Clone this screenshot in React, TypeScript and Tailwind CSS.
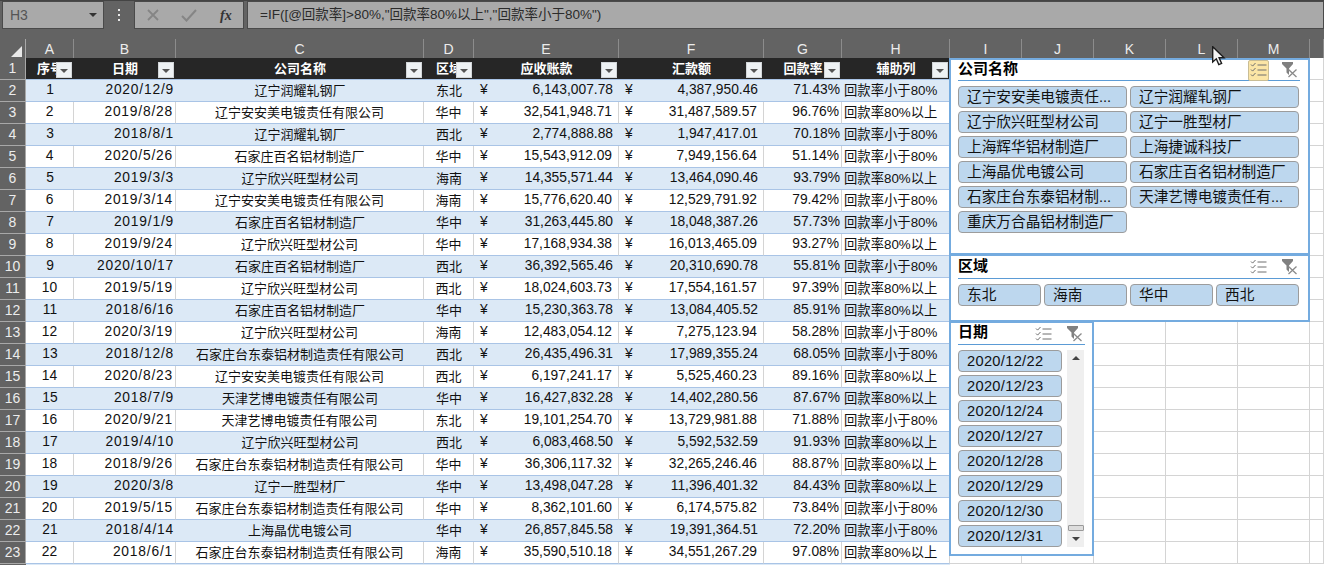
const LOW = "回款率小于80%"
const HIGH = "回款率80%以上"

const COMPANY_A = "辽宁润耀轧钢厂"
const COMPANY_B = "辽宁安安美电镀责任有限公司"
const COMPANY_C = "石家庄百名铝材制造厂"
const COMPANY_D = "辽宁欣兴旺型材公司"
const COMPANY_E = "石家庄台东泰铝材制造责任有限公司"

const rows: [string, string, string, string, string, string, string][] = [
  ["2020/12/9", COMPANY_A, "东北", "6,143,007.78", "4,387,950.46", "71.43%", LOW],
  ["2019/8/28", COMPANY_B, "华中", "32,541,948.71", "31,487,589.57", "96.76%", HIGH],
  ["2018/8/1", COMPANY_A, "西北", "2,774,888.88", "1,947,417.01", "70.18%", LOW],
  ["2020/5/26", COMPANY_C, "华中", "15,543,912.09", "7,949,156.64", "51.14%", LOW],
  ["2019/3/3", COMPANY_D, "海南", "14,355,571.44", "13,464,090.46", "93.79%", HIGH],
  ["2019/3/14", COMPANY_B, "海南", "15,776,620.40", "12,529,791.92", "79.42%", LOW],
  ["2019/1/9", COMPANY_C, "华中", "31,263,445.80", "18,048,387.26", "57.73%", LOW],
  ["2019/9/24", COMPANY_D, "华中", "17,168,934.38", "16,013,465.09", "93.27%", HIGH],
  ["2020/10/17", COMPANY_C, "西北", "36,392,565.46", "20,310,690.78", "55.81%", LOW],
  ["2019/5/19", COMPANY_D, "西北", "18,024,603.73", "17,554,161.57", "97.39%", HIGH],
  ["2018/6/16", COMPANY_C, "华中", "15,230,363.78", "13,084,405.52", "85.91%", HIGH],
  ["2020/3/19", COMPANY_D, "海南", "12,483,054.12", "7,275,123.94", "58.28%", LOW],
  ["2018/12/8", COMPANY_E, "西北", "26,435,496.31", "17,989,355.24", "68.05%", LOW],
  ["2020/8/23", COMPANY_B, "西北", "6,197,241.17", "5,525,460.23", "89.16%", HIGH],
  ["2018/7/9", "天津艺博电镀责任有限公司", "华中", "16,427,832.28", "14,402,280.56", "87.67%", HIGH],
  ["2020/9/21", "天津艺博电镀责任有限公司", "东北", "19,101,254.70", "13,729,981.88", "71.88%", LOW],
  ["2019/4/10", COMPANY_D, "西北", "6,083,468.50", "5,592,532.59", "91.93%", HIGH],
  ["2018/9/26", COMPANY_E, "华中", "36,306,117.32", "32,265,246.46", "88.87%", HIGH],
  ["2020/3/8", "辽宁一胜型材厂", "华中", "13,498,047.28", "11,396,401.32", "84.43%", HIGH],
  ["2019/5/15", COMPANY_E, "华中", "8,362,101.60", "6,174,575.82", "73.84%", LOW],
  ["2018/4/14", "上海晶优电镀公司", "华中", "26,857,845.58", "19,391,364.51", "72.20%", LOW],
  ["2018/6/1", COMPANY_E, "海南", "35,590,510.18", "34,551,267.29", "97.08%", HIGH],
]

const gridCols =
  "grid grid-cols-[26px_48px_102px_248px_50px_145px_145px_78px_108px_72px_72px_72px_72px_72px_14px]"

function FilterButton() {
  return (
    <span className="absolute right-[2px] top-[4px] flex h-[16px] w-[16px] items-center justify-center border border-[#d2d6d9] bg-[#eef2f4]">
      <span className="mt-[2px] h-0 w-0 border-x-[4px] border-t-[4px] border-x-transparent border-t-[#555555]" />
    </span>
  )
}

function MultiIcon() {
  return (
    <svg width="18" height="16" viewBox="0 0 18 16" fill="none" stroke="#6f6f6f" strokeWidth="1">
      <path d="M1 2.5l1.6 1.6L5.5 1M1 7.5l1.6 1.6L5.5 6M1 12.5l1.6 1.6L5.5 11" />
      <path d="M7.5 3h9M7.5 8h9M7.5 13h9" />
    </svg>
  )
}

function ClearIcon() {
  return (
    <svg width="17" height="16" viewBox="0 0 17 16">
      <path d="M0 0h11v2L7 6.5V13L4.5 10.5V6.5L0 2z" fill="#808080" />
      <path d="M6.5 7.5l8 7.5M14.5 7.5l-8 7.5" stroke="#8a8a8a" strokeWidth="1.3" fill="none" />
    </svg>
  )
}

function SlicerHead({ title, active, height }: { title: string; active?: boolean; height: string }) {
  return (
    <div className={`flex items-center justify-between border-b border-[#5b9bd5] ${height}`}>
      <span className="pb-[2px] text-[15px] font-bold text-black">{title}</span>
      <div className="flex items-center gap-[13px] pr-[1px]">
        <span
          className={
            active
              ? "flex h-[21px] w-[21px] items-center justify-center rounded-[2px] border border-[#c9bd95] bg-[#fbe5a6]"
              : "flex h-[21px] w-[21px] items-center justify-center"
          }
        >
          <MultiIcon />
        </span>
        <ClearIcon />
      </div>
    </div>
  )
}

function SlicerItem({ label, className }: { label: string; className?: string }) {
  return (
    <div
      className={`flex h-[22px] items-center overflow-hidden whitespace-nowrap rounded-[4px] border border-[#9c9c9c] bg-[#bdd7ee] pl-[8px] text-[14.67px] text-[#111111] ${className ?? ""}`}
    >
      {label}
    </div>
  )
}

function Cursor() {
  return (
    <svg className="absolute left-[1212px] top-[46px]" width="14" height="20" viewBox="0 0 14 20">
      <path
        d="M0.7 0.7V16L4.3 12.8L6.8 18.6L9.6 17.4L7.1 11.8H12z"
        fill="#f4f4f4"
        stroke="#1c1c1c"
        strokeWidth="1.4"
      />
    </svg>
  )
}

export default function App() {
  const blank = ["I", "J", "K", "L", "M", ""]
  return (
    <div
      className="relative h-[565px] w-[1324px] overflow-hidden bg-white text-[13.33px] text-[#111111]"
      style={{ fontFamily: '"Liberation Sans", "Noto Sans CJK SC", sans-serif' }}
    >
      {/* formula bar */}
      <div className="flex h-[39px] items-start border-t border-[#444444] bg-[#636363] pl-[2px]">
        <div className="flex h-[28px] w-[102px] items-center justify-between border border-[#4a4a4a] bg-[#a9a9a9] pl-[7px] pr-[6px] text-[14px] text-[#555555]">
          <span>H3</span>
          <span className="h-0 w-0 border-x-[4px] border-t-[4px] border-x-transparent border-t-[#333333]" />
        </div>
        <div className="flex h-[28px] w-[30px] flex-col items-center justify-center gap-[3px]">
          <span className="h-[2px] w-[2px] bg-[#e8e8e8]" />
          <span className="h-[2px] w-[2px] bg-[#e8e8e8]" />
          <span className="h-[2px] w-[2px] bg-[#e8e8e8]" />
        </div>
        <div className="flex h-[28px] w-[110px] items-center border border-[#4a4a4a] bg-[#a9a9a9] pl-[12px]">
          <svg width="12" height="12" viewBox="0 0 12 12" fill="none" stroke="#858585" strokeWidth="1.8">
            <path d="M1 1l10 10M11 1L1 11" />
          </svg>
          <svg className="ml-[22px]" width="16" height="13" viewBox="0 0 16 13" fill="none" stroke="#858585" strokeWidth="2">
            <path d="M1 7l4.5 4.5L15 1" />
          </svg>
          <span
            className="ml-[23px] text-[14px] font-bold italic text-[#333333]"
            style={{ fontFamily: '"Liberation Serif", serif' }}
          >
            fx
          </span>
        </div>
        <div className="ml-[3px] flex h-[28px] flex-1 items-center border border-[#4a4a4a] bg-[#a9a9a9] pl-[12px] text-[13.5px] text-[#2b2b2b]">
          =IF([@回款率]&gt;80%,"回款率80%以上","回款率小于80%")
        </div>
      </div>

      {/* column letters */}
      <div className={`${gridCols} h-[19px] bg-[#636363] text-[14px] text-[#ececec]`}>
        <div className="flex items-end justify-end border-r border-[#a8a8a8] pb-[3px] pr-[3px]">
          <svg width="11" height="11" viewBox="0 0 11 11">
            <path d="M11 0v11H0z" fill="#e8e8e8" />
          </svg>
        </div>
        {["A", "B", "C", "D", "E", "F", "G", "H", ...blank].map((c, i) => (
          <div key={i} className="flex items-center justify-center border-r border-[#8c8c8c]">
            {c}
          </div>
        ))}
      </div>

      {/* header row */}
      <div className={`${gridCols} h-[22px]`}>
        <div className="flex items-center justify-center border-b border-r border-[#a8a8a8] bg-[#636363] text-[14px] text-[#ececec]">
          1
        </div>
        {["序号", "日期", "公司名称", "区域", "应收账款", "汇款额", "回款率", "辅助列"].map((h) => (
          <div
            key={h}
            className="relative flex items-center justify-center overflow-hidden border-b border-[#a9c4e6] bg-[#262626] text-[13px] font-bold text-white"
          >
            <span className="whitespace-nowrap">{h}</span>
            <FilterButton />
          </div>
        ))}
        {blank.map((_, i) => (
          <div key={i} className="border-b border-r border-[#d4d4d4]" />
        ))}
      </div>

      {/* data rows */}
      {rows.map((r, i) => {
        const odd = i % 2 === 0
        const cell = `flex items-center border-b border-[#a9c4e6] ${
          odd ? "bg-[#dce9f6]" : "border-r border-r-[#d4d4d4] bg-white"
        }`
        return (
          <div key={i} className={`${gridCols} h-[22px]`}>
            <div className="flex items-center justify-center border-b border-r border-[#a8a8a8] bg-[#636363] text-[14px] text-[#ececec]">
              {i + 2}
            </div>
            <div className={`${cell} justify-center text-[13.8px]`}>{i + 1}</div>
            <div className={`${cell} justify-end pr-[2px] text-[13.8px] tracking-[0.8px]`}>{r[0]}</div>
            <div className={`${cell} justify-center whitespace-nowrap text-[13px]`}>{r[1]}</div>
            <div className={`${cell} justify-center text-[13px]`}>{r[2]}</div>
            <div className={`${cell} justify-between pl-[6px] pr-[6px] text-[13.8px]`}>
              <span>¥</span>
              <span>{r[3]}</span>
            </div>
            <div className={`${cell} justify-between pl-[6px] pr-[6px] text-[13.8px]`}>
              <span>¥</span>
              <span>{r[4]}</span>
            </div>
            <div className={`${cell} justify-end pr-[2px] text-[13.8px]`}>{r[5]}</div>
            <div className={`${cell} pl-[2px] whitespace-nowrap`}>{r[6]}</div>
            {blank.map((_, j) => (
              <div key={j} className="border-b border-r border-[#d4d4d4]" />
            ))}
          </div>
        )
      })}

      {/* row 24, only its top edge shows */}
      <div className={`${gridCols} h-[22px]`}>
        <div className="bg-[#636363]" />
        <div className="col-span-8 bg-[#dce9f6]" />
      </div>

      {/* company slicer */}
      <div className="absolute left-[949px] top-[58px] h-[197px] w-[361px] border-2 border-[#74abdf] bg-white pl-[7px] pr-[8px]">
        <SlicerHead title="公司名称" active height="h-[21px]" />
        <div className="mt-[5px] grid grid-cols-[169px_169px] gap-x-[3px] gap-y-[3px]">
          {[
            "辽宁安安美电镀责任...",
            "辽宁润耀轧钢厂",
            "辽宁欣兴旺型材公司",
            "辽宁一胜型材厂",
            "上海辉华铝材制造厂",
            "上海捷诚科技厂",
            "上海晶优电镀公司",
            "石家庄百名铝材制造厂",
            "石家庄台东泰铝材制...",
            "天津艺博电镀责任有...",
            "重庆万合晶铝材制造厂",
          ].map((c) => (
            <SlicerItem key={c} label={c} />
          ))}
        </div>
      </div>

      {/* region slicer */}
      <div className="absolute left-[949px] top-[254px] h-[68px] w-[361px] border-2 border-[#74abdf] bg-white pl-[7px] pr-[8px]">
        <SlicerHead title="区域" height="h-[23px]" />
        <div className="mt-[5px] grid grid-cols-[83px_83px_83px_83px] gap-x-[3px]">
          {["东北", "海南", "华中", "西北"].map((c) => (
            <SlicerItem key={c} label={c} />
          ))}
        </div>
      </div>

      {/* date slicer */}
      <div className="absolute left-[949px] top-[321px] h-[235px] w-[145px] border-2 border-[#74abdf] bg-white pl-[7px] pr-[7px]">
        <SlicerHead title="日期" height="h-[22px]" />
        <div className="mt-[5px] flex gap-[5px]">
          <div className="flex w-[104px] flex-col gap-[3px]">
            {["22", "23", "24", "27", "28", "29", "30", "31"].map((d) => (
              <SlicerItem key={d} label={`2020/12/${d}`} className="tracking-[0.3px]" />
            ))}
          </div>
          <div className="flex h-[197px] w-[17px] flex-col items-center justify-between bg-[#efefef] py-[6px]">
            <span className="h-0 w-0 border-x-[4px] border-b-[4px] border-x-transparent border-b-[#444444]" />
            <div className="flex w-full flex-col items-center gap-[6px]">
              <span className="h-[6px] w-[16px] rounded-[1px] border border-[#9a9a9a] bg-[#dddddd]" />
              <span className="h-0 w-0 border-x-[4px] border-t-[4px] border-x-transparent border-t-[#444444]" />
            </div>
          </div>
        </div>
      </div>

      <Cursor />
    </div>
  )
}
